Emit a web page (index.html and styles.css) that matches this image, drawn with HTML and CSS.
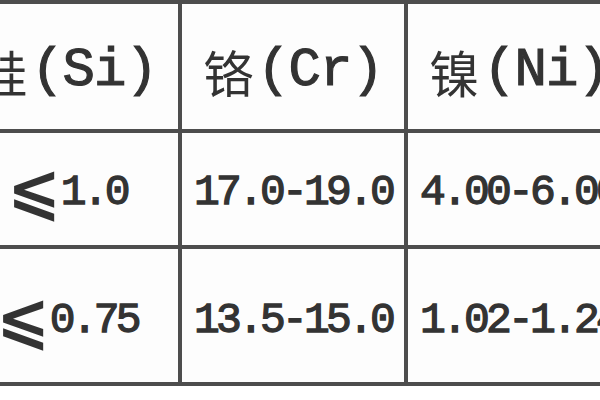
FILE: index.html
```html
<!DOCTYPE html>
<html lang="zh">
<head>
<meta charset="utf-8">
<title>不锈钢化学成分表</title>
<link rel="stylesheet" href="styles.css">
</head>
<body>
<div class="table">
  <div class="cell head"><span class="zh">硅</span>(Si)</div>
  <div class="cell head"><span class="zh">铬</span>(Cr)</div>
  <div class="cell head"><span class="zh">镍</span>(Ni)</div>

  <div class="cell num r2"><span class="le">⩽</span>1.0</div>
  <div class="cell num r2">17.0-19.0</div>
  <div class="cell num r2">4.00-6.00</div>

  <div class="cell num r3"><span class="le">⩽</span>0.75</div>
  <div class="cell num r3">13.5-15.0</div>
  <div class="cell num r3">1.02-1.24</div>
</div>
</body>
</html>
```
FILE: styles.css
```css
html, body {
  margin: 0;
  padding: 0;
  overflow: hidden;
  background: #ffffff;
}

.table {
  display: grid;
  grid-template-columns: 222px 222px 222px;
  grid-template-rows: 125px 112px 133px;
  gap: 4px;
  padding: 4px;
  width: max-content;
  margin-left: -48px;
  background: #4d4d4d;
}

.cell {
  background: #fdfdfd;
  display: flex;
  align-items: center;
  justify-content: center;
  color: #333333;
  font-family: "Liberation Mono", "Noto Sans CJK SC", monospace;
  white-space: nowrap;
  box-sizing: border-box;
}

.head {
  font-size: 54px;
  font-weight: 400;
  -webkit-text-stroke: 1.2px #333333;
  letter-spacing: -1px;
  padding-top: 8px;
}

.head .zh {
  font-family: "Noto Sans CJK SC", sans-serif;
  font-size: 50px;
  -webkit-text-stroke: 0;
  letter-spacing: 0;
  margin-right: 4px;
}

.num {
  font-size: 43px;
  font-weight: 400;
  letter-spacing: -3.8px;
  -webkit-text-stroke: 1.3px #333333;
}

.r2 {
  padding-top: 6px;
}

.r3 {
  padding-top: 10px;
}

.le {
  font-family: "DejaVu Sans", sans-serif;
  font-weight: 700;
  font-size: 64px;
  line-height: 1;
  letter-spacing: 0;
  -webkit-text-stroke: 0;
  margin-right: 0;
  position: relative;
  top: -2px;
}
```
